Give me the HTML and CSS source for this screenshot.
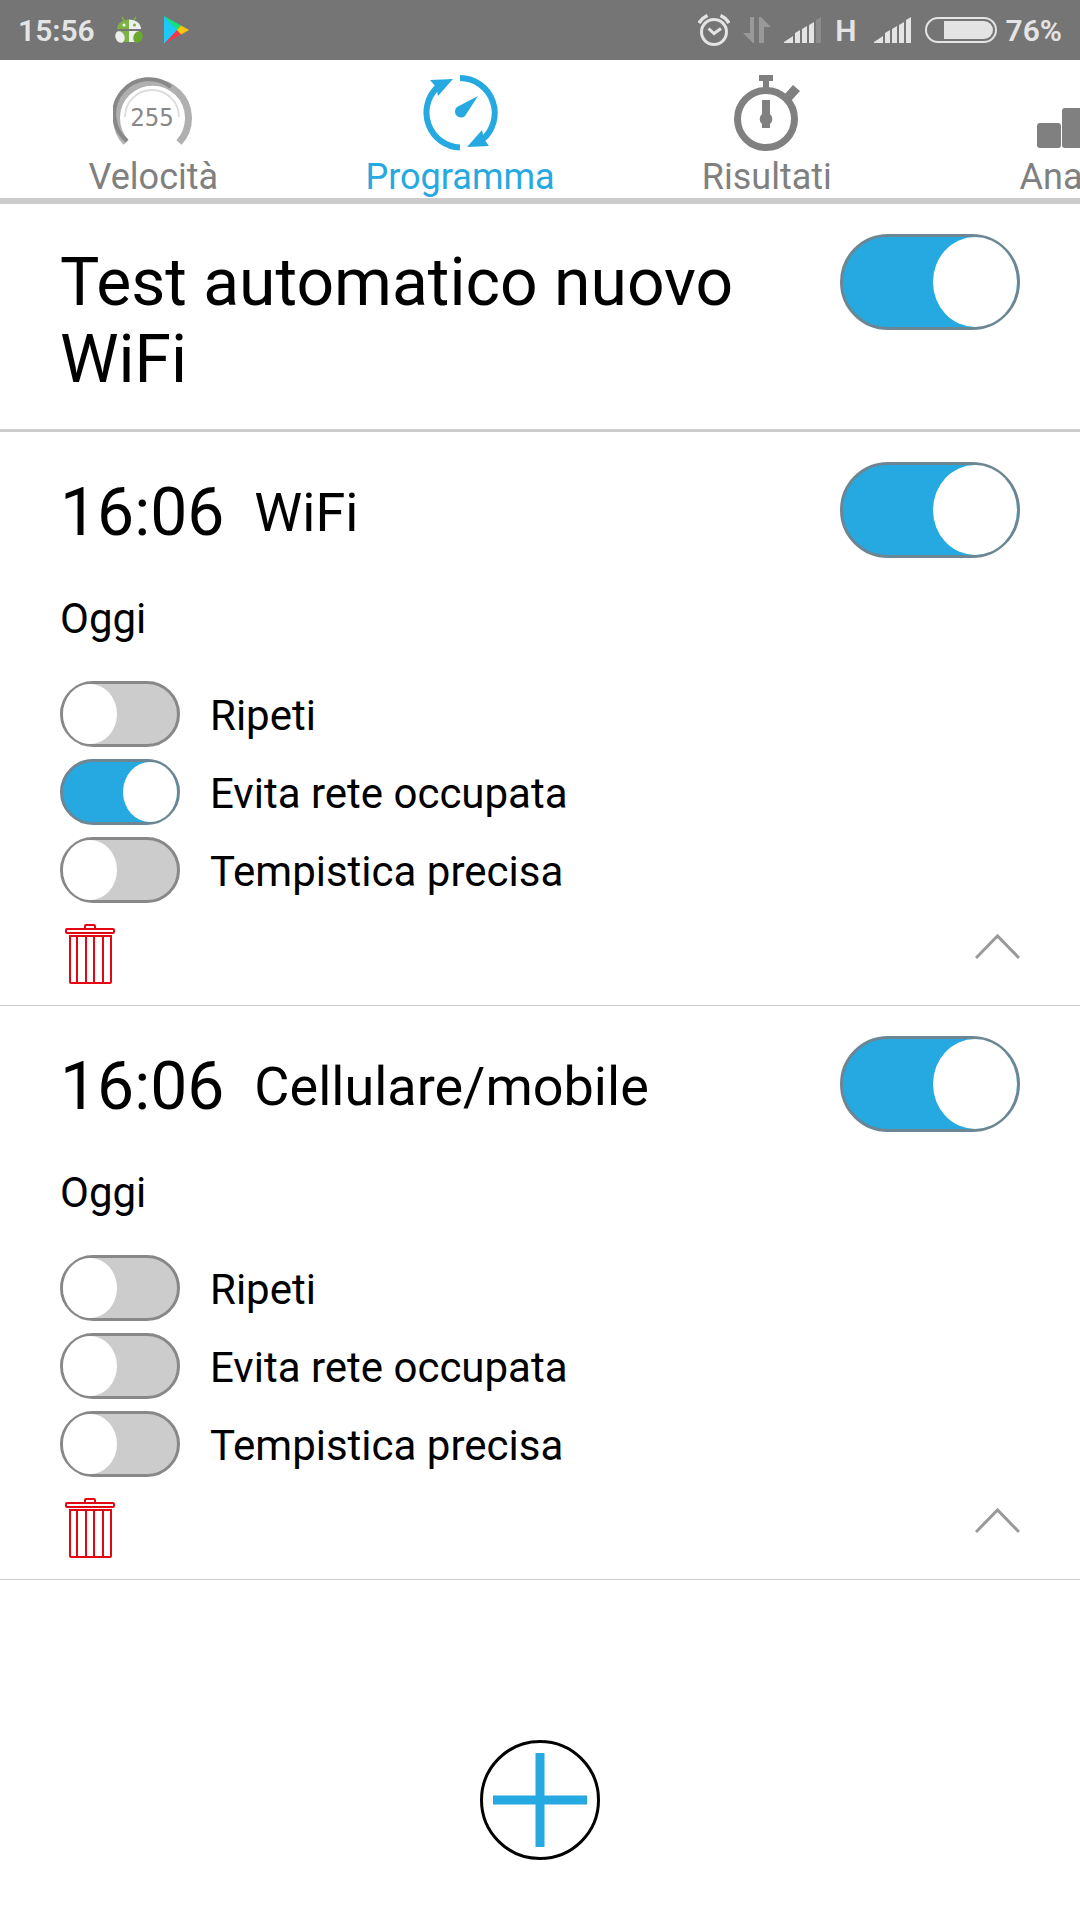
FILE: index.html
```html
<!DOCTYPE html>
<html lang="it">
<head>
<meta charset="utf-8">
<meta name="viewport" content="width=device-width, initial-scale=1">
<title>Programma</title>
<link rel="stylesheet" href="styles.css">
</head>
<body>
<header class="status">
  <div class="status-group status-left">
    <time>15:56</time>
    <svg width="28" height="28" viewBox="0 0 28 28" aria-hidden="true">
      <path d="M7 1l3 5M21 1l-3 5" stroke="#7cb342" stroke-width="1.5"/>
      <path d="M2 13C2 7 8 3.500 14 3.500V13z" fill="#7cb342"/>
      <path d="M14 3.500C20 3.500 26 7 26 13H14z" fill="#eee"/>
      <circle cx="9" cy="9" r="1.500" fill="#fff"/><circle cx="19.500" cy="9" r="1.500" fill="#7cb342"/>
      <path d="M4 15h10v11H9z" fill="#7cb342"/><path d="M14 15h10l-4 11h-6z" fill="#eee"/>
      <ellipse cx="5" cy="21" rx="4.500" ry="6" transform="rotate(-20 5 21)" fill="#eee"/>
      <ellipse cx="23" cy="21" rx="4.500" ry="6" transform="rotate(20 23 21)" fill="#6aa82e"/>
    </svg>
    <svg width="26" height="28" viewBox="0 0 26 28" aria-hidden="true">
      <path d="M1 0v28l14-14z" fill="#1cc8f5"/><path d="M1 0l17 9.500-4 4.500z" fill="#12e37a"/>
      <path d="M1 28l17-9.500-4-4.500z" fill="#f4364c"/><path d="M18 9.500l8 4.500-8 4.500-4-4.500z" fill="#fdc70c"/>
    </svg>
  </div>
  <div class="status-group status-right">
    <svg width="32" height="32" viewBox="0 0 32 32" fill="none" stroke="#e4e4e4" aria-hidden="true">
      <circle cx="16" cy="18" r="12.500" stroke-width="3"/>
      <path d="M10.500 14.500l5.500 5 7-5" stroke-width="3"/>
      <path d="M1 9Q4 4 9.500 1.500M31 9Q28 4 22.500 1.500" stroke-width="3.500"/>
    </svg>
    <svg width="28" height="26" viewBox="0 0 28 26" fill="#999" aria-hidden="true">
      <path d="M11 26H10L0 16h7V0h4zM16 0h2l10 10h-7v16h-5z"/>
    </svg>
    <svg width="38" height="26" viewBox="0 0 38 26" fill="#e4e4e4" aria-hidden="true">
      <path d="M0 26v-1l9-6v7zM11 26V16l5-3v13zM18 26V12l5-3v17zM25 26V8l5-3v21z"/>
      <path fill="#8c8c8c" d="M32 26V3l5-3v26z"/>
    </svg>
    <span>H</span>
    <svg class="signal-full" width="38" height="26" viewBox="0 0 38 26" fill="#e4e4e4" aria-hidden="true">
      <path d="M0 26v-1l9-6v7zM11 26V16l5-3v13zM18 26V12l5-3v17zM25 26V8l5-3v21zM32 26V3l5-3v26z"/>
    </svg>
    <svg width="72" height="26" viewBox="0 0 72 26" aria-hidden="true">
      <rect x="1" y="1" width="70" height="24" rx="12" fill="none" stroke="#e4e4e4" stroke-width="2"/>
      <path d="M19 4h40a9 9 0 0 1 0 18H19z" fill="#e4e4e4"/>
    </svg>
    <span class="percent">76%</span>
  </div>
</header>

<nav class="tabs">
  <a class="tab" href="#velocita">
    <svg width="80" height="76" viewBox="0 0 80 76" aria-hidden="true">
      <g fill="none">
        <path d="M13 67.500A36 36 0 1 1 66 67.500" stroke="#b0b0b0" stroke-width="7"/>
        <path d="M14 66A34.500 34.500 0 0 1 58 12" stroke="#888" stroke-width="4"/>
        <path d="M12 42A27 27 0 0 1 66 42" stroke="#ddd" stroke-width="2"/>
      </g>
      <text class="gauge-value" x="39" y="51" text-anchor="middle">255</text>
    </svg>
    <span>Velocità</span>
  </a>
  <a class="tab tab-active" href="#programma" aria-current="page">
    <svg width="76" height="76" viewBox="0 0 76 76" aria-hidden="true">
      <path d="M38 3A35 35 0 0 1 60 65M38 72.500A35 35 0 0 1 15 12.500" fill="none" stroke="currentColor" stroke-width="6"/>
      <path d="M8 5l23-1-15 17-2-9zM67 71l-22 1 15-17 2 9z" fill="currentColor"/>
      <path d="M56 21L43 41a6 6 0 1 1-8-9z" fill="currentColor"/>
    </svg>
    <span>Programma</span>
  </a>
  <a class="tab" href="#risultati">
    <svg width="76" height="76" viewBox="0 0 76 76" aria-hidden="true">
      <circle cx="37" cy="44" r="28.500" fill="none" stroke="currentColor" stroke-width="7"/>
      <path d="M30 0h14v6h-4v8h-6V6h-4zM55 20l9-10 7 6-9 10z" fill="currentColor"/>
      <path d="M33 25h8v14a6.500 6.500 0 0 1 0 10v4h-8v-4a6.500 6.500 0 0 1 0-10z" fill="currentColor"/>
    </svg>
    <span>Risultati</span>
  </a>
  <a class="tab" href="#analisi">
    <svg width="76" height="76" viewBox="0 0 76 76" fill="currentColor" aria-hidden="true">
      <rect x="1" y="48" width="24" height="25" rx="3"/><rect x="26" y="33" width="24" height="40" rx="3"/><rect x="51" y="17" width="24" height="56" rx="3"/>
    </svg>
    <span>Analisi</span>
  </a>
</nav>

<main>
  <section class="auto">
    <label class="auto-title" for="auto-wifi">Test automatico nuovo WiFi</label>
    <input class="switch switch-large" type="checkbox" id="auto-wifi" checked>
  </section>

  <section class="schedule">
    <div class="schedule-head">
      <label class="schedule-name" for="wifi-on"><time>16:06</time><span>WiFi</span></label>
      <input class="switch switch-large" type="checkbox" id="wifi-on" checked>
    </div>
    <p class="day">Oggi</p>
    <div class="options">
      <label class="option"><input class="switch" type="checkbox"><span>Ripeti</span></label>
      <label class="option"><input class="switch" type="checkbox" checked><span>Evita rete occupata</span></label>
      <label class="option"><input class="switch" type="checkbox"><span>Tempistica precisa</span></label>
    </div>
    <div class="actions">
      <button type="button" aria-label="Elimina">
        <svg width="60" height="60" viewBox="0 0 60 60" fill="none" stroke="#e30613" stroke-width="2" aria-hidden="true">
          <path d="M25 4V2q0-1 1-1h8q1 0 1 1v2"/>
          <rect x="6" y="5" width="48" height="4" rx="1"/>
          <path d="M10 12h41v46q0 1-1 1H11q-1 0-1-1zM17 12v47M26 12v47M34 12v47M43 12v47"/>
        </svg>
      </button>
      <button type="button" aria-label="Comprimi">
        <svg width="45" height="60" viewBox="0 0 45 60" fill="none" stroke="#999" stroke-width="3" aria-hidden="true"><path d="M1 34L22.500 12 44 34"/></svg>
      </button>
    </div>
  </section>

  <section class="schedule">
    <div class="schedule-head">
      <label class="schedule-name" for="mobile-on"><time>16:06</time><span>Cellulare/mobile</span></label>
      <input class="switch switch-large" type="checkbox" id="mobile-on" checked>
    </div>
    <p class="day">Oggi</p>
    <div class="options">
      <label class="option"><input class="switch" type="checkbox"><span>Ripeti</span></label>
      <label class="option"><input class="switch" type="checkbox"><span>Evita rete occupata</span></label>
      <label class="option"><input class="switch" type="checkbox"><span>Tempistica precisa</span></label>
    </div>
    <div class="actions">
      <button type="button" aria-label="Elimina">
        <svg width="60" height="60" viewBox="0 0 60 60" fill="none" stroke="#e30613" stroke-width="2" aria-hidden="true">
          <path d="M25 4V2q0-1 1-1h8q1 0 1 1v2"/>
          <rect x="6" y="5" width="48" height="4" rx="1"/>
          <path d="M10 12h41v46q0 1-1 1H11q-1 0-1-1zM17 12v47M26 12v47M34 12v47M43 12v47"/>
        </svg>
      </button>
      <button type="button" aria-label="Comprimi">
        <svg width="45" height="60" viewBox="0 0 45 60" fill="none" stroke="#999" stroke-width="3" aria-hidden="true"><path d="M1 34L22.500 12 44 34"/></svg>
      </button>
    </div>
  </section>

  <button class="add" type="button" aria-label="Aggiungi">
    <svg width="120" height="120" viewBox="0 0 120 120" fill="none" aria-hidden="true">
      <circle cx="60" cy="60" r="58.500" stroke="#000" stroke-width="3"/>
      <path d="M60 13v94M13 60h94" stroke="#26a9e1" stroke-width="9"/>
    </svg>
  </button>
</main>
</body>
</html>
```
FILE: styles.css
```css
* {
  box-sizing: border-box;
}

body {
  margin: 0;
  background: #fff;
  color: #000;
  font-family: Roboto, "Liberation Sans", sans-serif;
}

svg {
  display: block;
  flex: none;
}

button {
  padding: 0;
  border: 0;
  background: none;
}

.status {
  display: flex;
  justify-content: space-between;
  height: 60px;
  padding: 0 18px;
  background: #757575;
  color: #e4e4e4;
  font-size: 30px;
  font-weight: 600;
}

.status-group {
  display: flex;
  align-items: center;
}

.status-left {
  gap: 20px;
}

.status-right {
  gap: 13px;
}

.signal-full {
  margin-left: 4px;
}

.percent {
  margin-left: -4px;
}

.tabs {
  display: flex;
  overflow: hidden;
  border-bottom: 6px solid #ccc;
}

.tab {
  display: flex;
  flex: 0 0 28.4%;
  flex-direction: column;
  align-items: center;
  gap: 6px;
  padding: 15px 0 1px;
  color: #808080;
  font-size: 36px;
  line-height: 40px;
  text-decoration: none;
}

.tab-active {
  color: #26a9e1;
}

.gauge-value {
  fill: #888;
  font-family: "DejaVu Sans Mono", monospace;
  font-size: 24px;
}

.auto {
  display: flex;
  align-items: flex-start;
  justify-content: space-between;
  gap: 60px;
  padding: 30px 60px 31px;
  border-bottom: 3px solid #ccc;
}

.auto-title {
  padding-top: 10px;
  font-size: 66px;
  line-height: 77px;
}

.switch {
  display: flex;
  flex: none;
  width: 120px;
  height: 66px;
  margin: 0;
  border: 3px solid #888;
  border-radius: 48px;
  background: #ccc;
  appearance: none;
}

.switch::before {
  width: 54px;
  height: 60px;
  border-radius: 50%;
  background: #fff;
  content: "";
}

.switch:checked {
  justify-content: flex-end;
  border-color: #6c8793;
  background: #26a9e1;
}

.switch-large {
  width: 180px;
  height: 96px;
}

.switch-large::before {
  width: 84px;
  height: 90px;
}

.schedule {
  padding: 30px 60px 21px;
  border-bottom: 1px solid #ccc;
}

.schedule-head {
  display: flex;
  justify-content: space-between;
}

.schedule-name {
  display: flex;
  align-items: center;
  gap: 30px;
  height: 102px;
  font-size: 54px;
  line-height: 62px;
}

.schedule-name time {
  font-size: 66px;
}

.day {
  margin: 31px 0 38px;
  font-size: 42px;
  line-height: 48px;
}

.options {
  display: flex;
  flex-direction: column;
  gap: 12px;
}

.option {
  display: flex;
  align-items: center;
  gap: 30px;
  font-size: 42px;
  line-height: 48px;
}

.option span {
  padding-top: 4px;
}

.actions {
  display: flex;
  justify-content: space-between;
  margin-top: 21px;
}

.add {
  display: block;
  margin: 160px auto 60px;
  border-radius: 50%;
}
```
